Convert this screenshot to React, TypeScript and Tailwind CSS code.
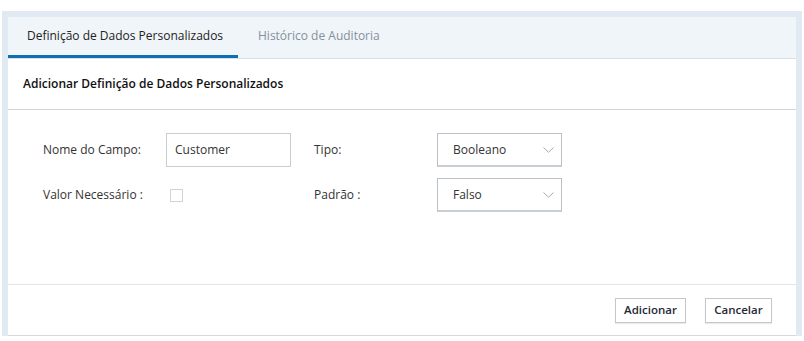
import React from "react";

function Chevron() {
  return (
    <svg width="11" height="6" viewBox="0 0 11 6" fill="none" className="shrink-0">
      <path d="M0.5 0.5 L5.5 5.2 L10.5 0.5" stroke="#a3abb3" strokeWidth="1" />
    </svg>
  );
}

function Select({ value }: { value: string }) {
  return (
    <div className="w-[125px] h-[34px] border border-[#b8bfc6] border-b-[2px] border-b-[#c9ced3] bg-white flex items-center justify-between pl-[15px] pr-[7px] pt-[1px] text-[12px] text-[#333]">
      <span>{value}</span>
      <Chevron />
    </div>
  );
}

export default function App() {
  return (
    <div className="w-[804px] h-[341px] bg-white pt-[11px] px-[2px] font-['Open_Sans',sans-serif]">
      <div className="bg-[#e1e9f2] pt-[6px] px-[6px] h-[325px]">
        <div className="bg-white h-[319px] flex flex-col border-b border-[#d5d9dc]">
          <div className="h-[42px] bg-[#f0f5f9] border-b border-[#d9e0e6] flex items-end">
            <div className="w-[230px] h-[41px] border-b-[3px] border-[#0e6eb0] flex items-center pl-[19px] text-[12px] text-[#222]">
              Definição de Dados Personalizados
            </div>
            <div className="h-[41px] flex items-center pl-[20px] pb-[3px] text-[12px] text-[#86909a]">
              Histórico de Auditoria
            </div>
          </div>
          <div className="h-[51px] border-b border-[#d4d4d4] flex items-center pl-[15px] text-[12px] font-semibold text-[#111]">
            Adicionar Definição de Dados Personalizados
          </div>
          <div className="flex-1 border-b border-[#e2e6e8] pt-[23px] pl-[35px]">
            <div className="flex items-center h-[34px] text-[12px] text-[#333]">
              <div className="w-[123px]">Nome do Campo:</div>
              <div className="w-[125px] h-[34px] border border-[#c9ced3] flex items-center pl-[8px]">Customer</div>
              <div className="w-[146px] pl-[23px]">Tipo:</div>
              <Select value="Booleano" />
            </div>
            <div className="flex items-center h-[34px] mt-[11px] text-[12px] text-[#333]">
              <div className="w-[127px]">Valor Necessário :</div>
              <div className="w-[121px]">
                <div className="w-[13px] h-[13px] border border-[#cfd4d8] bg-white"></div>
              </div>
              <div className="w-[146px] pl-[23px]">Padrão :</div>
              <Select value="Falso" />
            </div>
          </div>
          <div className="h-[50px] flex items-center justify-end pr-[24px] gap-[19px]">
            <button className="w-[71px] h-[25px] border border-[#c3c8cd] bg-white text-[11.5px] text-[#1f2a35] font-semibold shadow-[0_1px_1px_rgba(0,0,0,0.08)]">
              Adicionar
            </button>
            <button className="w-[67px] h-[25px] border border-[#c3c8cd] bg-white text-[11.5px] text-[#1f2a35] font-semibold shadow-[0_1px_1px_rgba(0,0,0,0.08)]">
              Cancelar
            </button>
          </div>
        </div>
      </div>
    </div>
  );
}
